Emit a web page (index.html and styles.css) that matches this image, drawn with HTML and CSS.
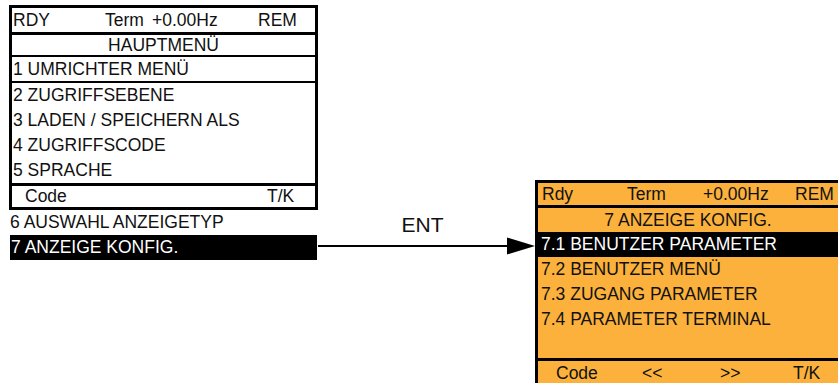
FILE: index.html
```html
<!DOCTYPE html>
<html lang="de">
<head>
<meta charset="utf-8">
<title>Anzeige Konfig</title>
<link rel="stylesheet" href="styles.css">
</head>
<body>
<div class="stage">
  <div class="left">
    <div class="box">
      <div class="hdr"><span>RDY</span><span>Term</span><span>+0.00Hz</span><span>REM</span></div>
      <div class="title">HAUPTMENÜ</div>
      <div class="item first">1 UMRICHTER MENÜ</div>
      <div class="item">2 ZUGRIFFSEBENE</div>
      <div class="item">3 LADEN / SPEICHERN ALS</div>
      <div class="item">4 ZUGRIFFSCODE</div>
      <div class="item">5 SPRACHE</div>
      <div class="foot"><span>Code</span><span>T/K</span></div>
    </div>
    <div class="item out">6 AUSWAHL ANZEIGETYP</div>
    <div class="item out sel">7 ANZEIGE KONFIG.</div>
  </div>
  <div class="link">
    <div class="ent">ENT</div>
    <svg class="arrow" width="217" height="18" viewBox="0 0 217 18">
      <line x1="0" y1="9" x2="200" y2="9" stroke="#000" stroke-width="2"/>
      <polygon points="189,0.5 217,9 189,17.5" fill="#000"/>
    </svg>
  </div>
  <div class="panel">
    <div class="phdr"><span>Rdy</span><span>Term</span><span>+0.00Hz</span><span>REM</span></div>
    <div class="ptitle">7 ANZEIGE KONFIG.</div>
    <div class="prow psel">7.1 BENUTZER PARAMETER</div>
    <div class="prow">7.2 BENUTZER MENÜ</div>
    <div class="prow">7.3 ZUGANG PARAMETER</div>
    <div class="prow">7.4 PARAMETER TERMINAL</div>
    <div class="prow empty"></div>
    <div class="pfoot"><span>Code</span><span>&lt;&lt;</span><span>&gt;&gt;</span><span>T/K</span></div>
  </div>
</div>
</body>
</html>
```

FILE: styles.css
```css
html, body {
  margin: 0;
  padding: 0;
  background: #fff;
  width: 838px;
  height: 383px;
  overflow: hidden;
}
body {
  font-family: "Liberation Sans", Arial, sans-serif;
  font-size: 17.5px;
  color: #111;
}
.stage {
  display: flex;
  align-items: flex-start;
}
.left {
  margin-left: 9px;
  margin-top: 5px;
  width: 309px;
  flex-shrink: 0;
}
.box {
  border: 3px solid #000;
}
.hdr {
  display: grid;
  grid-template-columns: 92px 47px 106px 1fr;
  align-items: center;
  height: 24px;
  padding-left: 1px;
  border-bottom: 3px solid #000;
}
.title {
  height: 20px;
  line-height: 20px;
  text-align: center;
  border-bottom: 2px solid #000;
}
.item {
  height: 25px;
  display: flex;
  align-items: center;
  padding-left: 1px;
}
.item.first {
  height: 24px;
  border-bottom: 2px solid #000;
}
.foot {
  display: grid;
  grid-template-columns: 242px 1fr;
  align-items: center;
  height: 21px;
  padding-left: 13px;
  border-top: 3px solid #000;
}
.out {
  padding-left: 1px;
}
.sel {
  background: #000;
  color: #fff;
  margin: 0 1px;
}
.link {
  width: 217px;
  flex-shrink: 0;
  margin-top: 213px;
}
.ent {
  height: 24px;
  line-height: 24px;
  font-size: 21px;
  text-align: center;
  padding-right: 8px;
}
.arrow {
  display: block;
}
.panel {
  margin-top: 180px;
  width: 300px;
  flex-shrink: 0;
  border: 3px solid #000;
  background: #fbb13c;
}
.phdr {
  display: grid;
  grid-template-columns: 85px 76px 92px 1fr;
  align-items: center;
  height: 22px;
  padding-left: 4px;
  border-bottom: 3px solid #000;
}
.ptitle {
  height: 24px;
  line-height: 24px;
  text-align: center;
}
.prow {
  height: 25px;
  display: flex;
  align-items: center;
  padding-left: 3px;
}
.psel {
  background: #000;
  color: #fff;
}
.prow.empty {
  height: 26px;
}
.pfoot {
  display: grid;
  grid-template-columns: 86px 78px 73px 1fr;
  align-items: center;
  height: 24px;
  padding-left: 18px;
  border-top: 3px solid #000;
}
```
